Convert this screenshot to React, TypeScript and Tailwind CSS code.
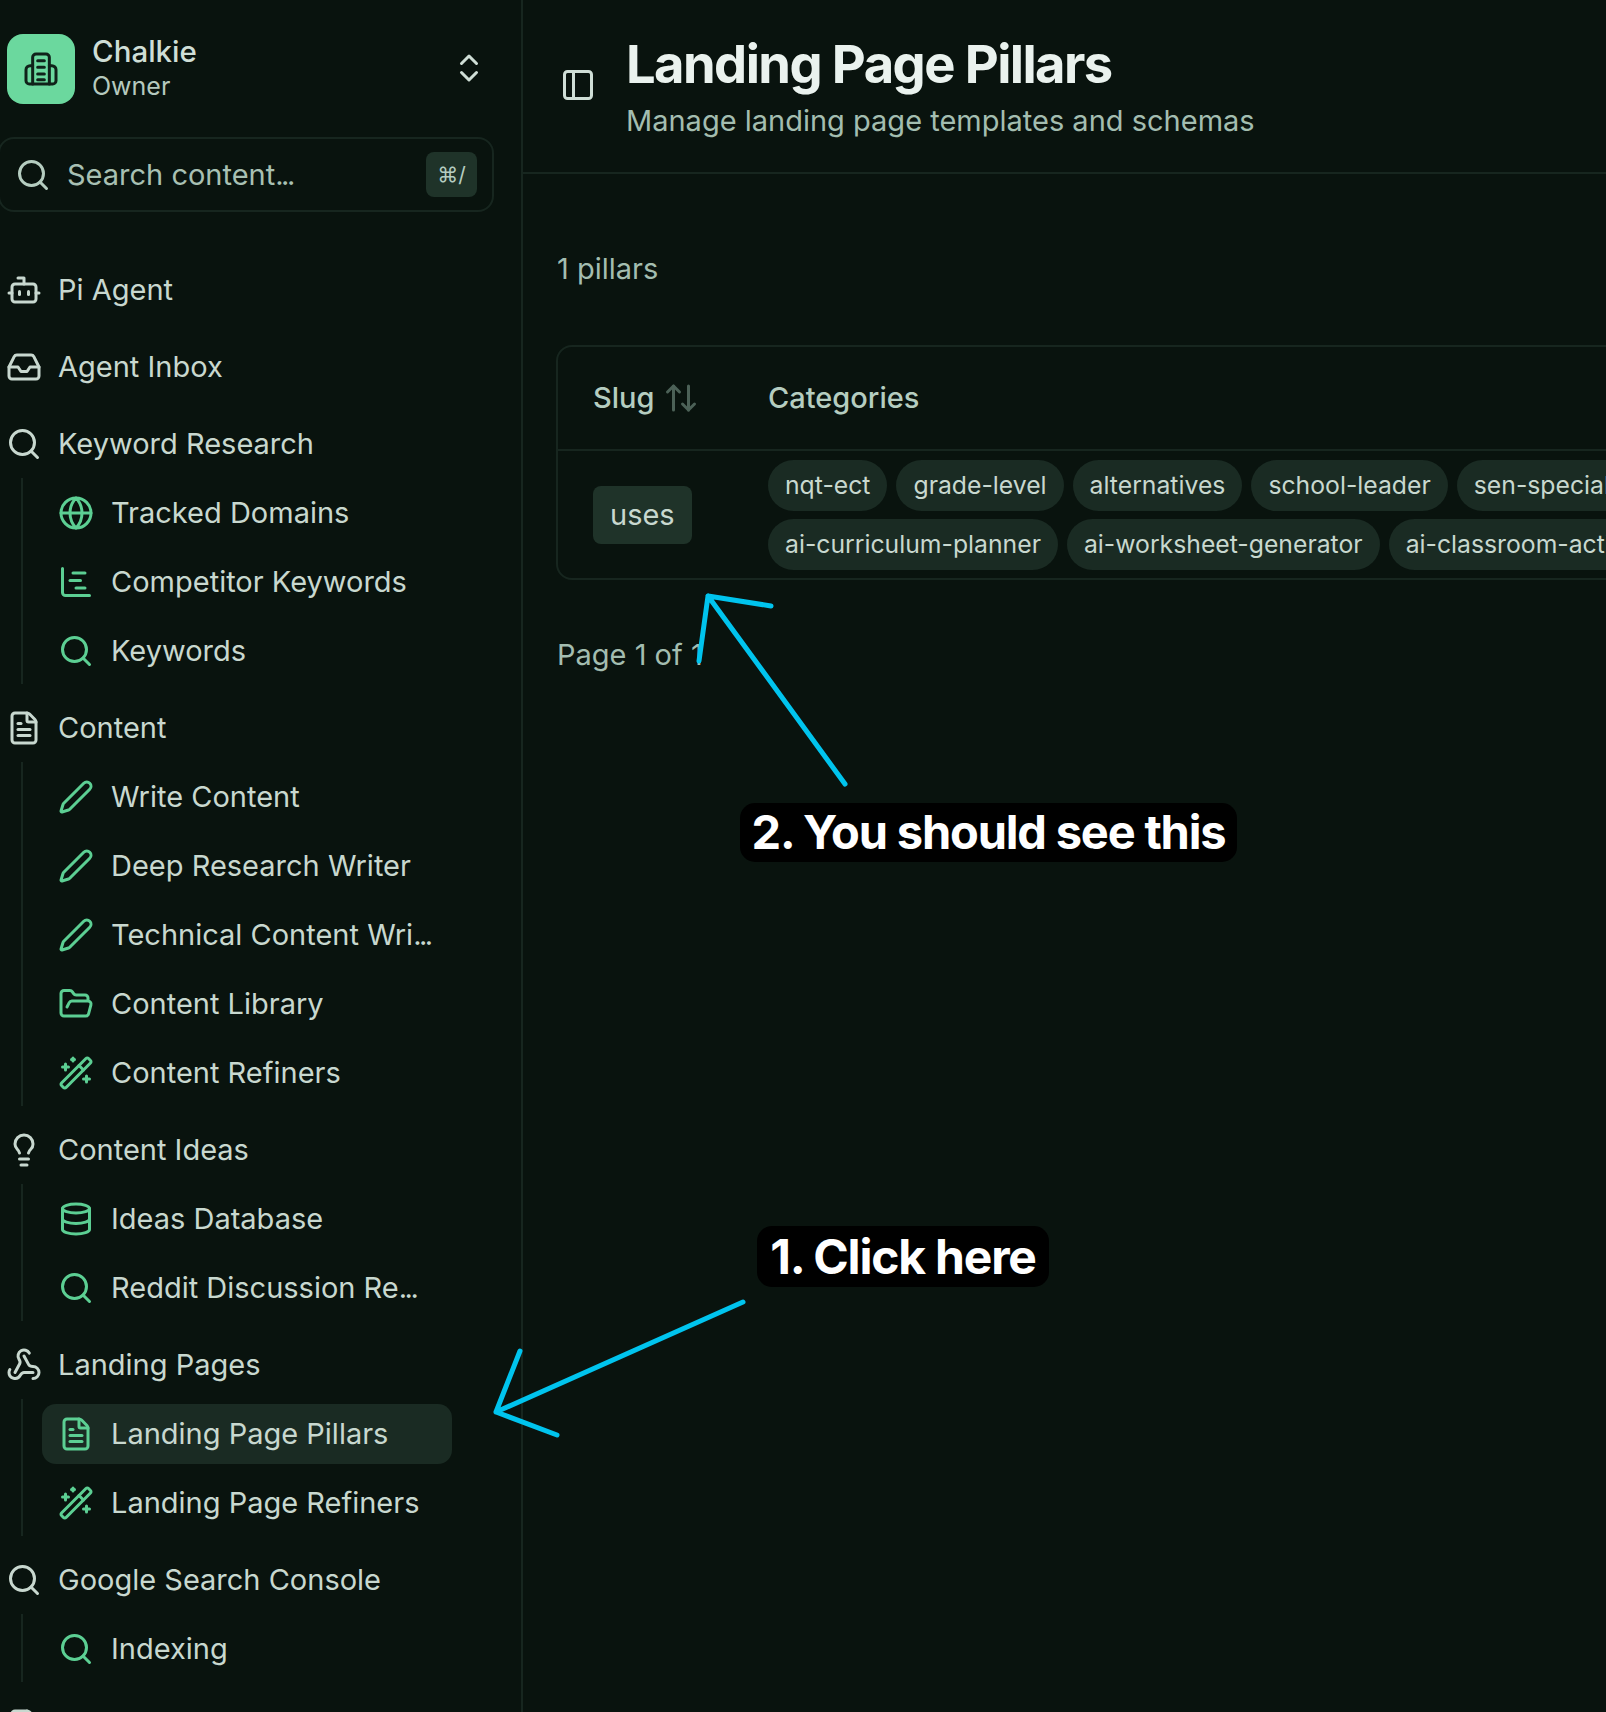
import {
  ArrowUpDown,
  Bot,
  ChartGantt,
  ChevronsUpDown,
  Database,
  FileText,
  FolderOpen,
  Globe,
  Inbox,
  Lightbulb,
  PanelLeft,
  Pen,
  Search,
  WandSparkles,
  Webhook,
} from 'lucide-react';
import type { LucideIcon } from 'lucide-react';

type SubItem = { icon: LucideIcon; label: string; active?: boolean; cut?: boolean };
type Group = { icon?: LucideIcon; label: string; items?: SubItem[] };

const groups: Group[] = [
  { icon: Bot, label: 'Pi Agent' },
  { icon: Inbox, label: 'Agent Inbox' },
  {
    icon: Search,
    label: 'Keyword Research',
    items: [
      { icon: Globe, label: 'Tracked Domains' },
      { icon: ChartGantt, label: 'Competitor Keywords' },
      { icon: Search, label: 'Keywords' },
    ],
  },
  {
    icon: FileText,
    label: 'Content',
    items: [
      { icon: Pen, label: 'Write Content' },
      { icon: Pen, label: 'Deep Research Writer' },
      { icon: Pen, label: 'Technical Content Wri', cut: true },
      { icon: FolderOpen, label: 'Content Library' },
      { icon: WandSparkles, label: 'Content Refiners' },
    ],
  },
  {
    icon: Lightbulb,
    label: 'Content Ideas',
    items: [
      { icon: Database, label: 'Ideas Database' },
      { icon: Search, label: 'Reddit Discussion Re', cut: true },
    ],
  },
  {
    icon: Webhook,
    label: 'Landing Pages',
    items: [
      { icon: FileText, label: 'Landing Page Pillars', active: true },
      { icon: WandSparkles, label: 'Landing Page Refiners' },
    ],
  },
  {
    icon: Search,
    label: 'Google Search Console',
    items: [{ icon: Search, label: 'Indexing' }],
  },
  // only the top of this icon is visible at the bottom edge
  { icon: FileText, label: '' },
];

const categoryRows = [
  ['nqt-ect', 'grade-level', 'alternatives', 'school-leader', 'sen-specialist'],
  ['ai-curriculum-planner', 'ai-worksheet-generator', 'ai-classroom-activities'],
];

const Dots = () => <span className="tracking-[-2.500px]">...</span>;

const LogoMark = () => (
  <svg width="40" height="40" viewBox="0 0 24 24" fill="none" stroke="#10221a" strokeWidth="1.8" strokeLinecap="round" strokeLinejoin="round">
    <path d="M7 21V5a2 2 0 0 1 2-2h6a2 2 0 0 1 2 2v16" />
    <path d="M7 10H5.500A2.500 2.500 0 0 0 3 12.500V19a2 2 0 0 0 2 2h14a2 2 0 0 0 2-2v-6.500a2.500 2.500 0 0 0-2.500-2.500H17" />
    <path d="M10 7h4M10 11h4M10 15h4M10 18.500h4" />
  </svg>
);

const Sidebar = () => (
  <aside className="w-[523px] shrink-0 border-r-2 border-[#17261f] pt-[34px] overflow-hidden">
    {/* Workspace */}
    <div className="flex items-center pl-[7px] pr-[34px]">
      <div className="w-[68px] h-[70px] rounded-[16px] bg-[#6bd89e] flex items-center justify-center shrink-0">
        <LogoMark />
      </div>
      <div className="ml-[17px] flex-1 -mt-[2px]">
        <p className="text-[29.500px] leading-[34px] font-medium text-[#cfded6]">Chalkie</p>
        <p className="text-[25px] leading-[32px] mt-[2px] text-[#b5c9be]">Owner</p>
      </div>
      <ChevronsUpDown size={36} strokeWidth={2} className="text-[#cfded6] -mt-[2px]" />
    </div>

    {/* Search */}
    <div className="mt-[33px] -ml-[2px] w-[496px] h-[75px] rounded-[16px] border-2 border-[#17261f] flex items-center pl-[15px] pr-[15px]">
      <Search size={36} strokeWidth={2} className="text-[#b5cdc0] shrink-0" />
      <span className="ml-[16px] flex-1 text-[29px] text-[#a8c0b3]">Search content<Dots /></span>
      <span className="w-[51px] h-[45px] rounded-[8px] bg-[#1f3329] flex items-center justify-center text-[21px] text-[#b5cdc0]">⌘/</span>
    </div>

    {/* Nav */}
    <nav className="mt-[48px] flex flex-col gap-[14px]">
      {groups.map((group) => {
        const GroupIcon = group.icon;
        return (
          <div key={group.label} className={group.items ? '' : 'mb-[3px]'}>
            <div className="h-[60px] flex items-center pl-[6px] text-[#c8d8cf]">
              {GroupIcon && <GroupIcon size={36} strokeWidth={2} className="shrink-0" />}
              <span className="ml-[16px] text-[29px]">{group.label}</span>
            </div>
            {group.items && (
              <div className="mt-[4px] ml-[21px] border-l-2 border-[#17261f] pl-[19px] pt-[5px] pb-[3px] flex flex-col gap-[9px] w-[431px]">
                {group.items.map((item) => {
                  const ItemIcon = item.icon;
                  return (
                    <div
                      key={item.label}
                      className={`h-[60px] rounded-[14px] flex items-center pl-[16px] pr-[21px] whitespace-nowrap ${item.active ? 'bg-[#1a2b23]' : ''}`}
                    >
                      <ItemIcon size={36} strokeWidth={2} className="text-[#5ccf93] shrink-0" />
                      <span className="ml-[17px] text-[29px] text-[#c8d8cf]">
                        {item.label}
                        {item.cut && <Dots />}
                      </span>
                    </div>
                  );
                })}
              </div>
            )}
          </div>
        );
      })}
    </nav>
  </aside>
);

const PillarsPage = () => (
  <main className="flex-1 min-w-0 overflow-hidden">
    <header className="h-[174px] border-b-2 border-[#17261f] flex items-start pt-[36px] pl-[37px]">
      <PanelLeft size={36} strokeWidth={2} className="mt-[31px] text-[#cfded6] shrink-0" />
      <div className="ml-[30px]">
        <h1 className="text-[52.500px] leading-[56px] font-bold tracking-[-0.03em] text-[#eaf2ee]">Landing Page Pillars</h1>
        <p className="mt-[9px] text-[29px] leading-[40px] text-[#a3bdb0]">Manage landing page templates and schemas</p>
      </div>
    </header>

    <div className="pl-[33px]">
      <p className="mt-[75px] pl-px text-[29px] leading-[40px] text-[#a3bdb0]">1 pillars</p>

      <div className="mt-[56px] w-[1500px] rounded-[16px] border-2 border-[#17261f]">
        <div className="h-[104px] border-b-2 border-[#17261f] flex items-center text-[29px] font-medium text-[#b5cdc0]">
          <div className="w-[210px] pl-[35px] flex items-center gap-[9px]">
            Slug
            <ArrowUpDown size={36} strokeWidth={2} className="text-[#4c6157]" />
          </div>
          <div>Categories</div>
        </div>
        <div className="flex items-center pt-[9px] pb-[8px]">
          <div className="w-[210px] pl-[35px]">
            <span className="inline-flex items-center h-[58px] px-[17px] rounded-[8px] bg-[#1f3329] text-[29px] text-[#c8d8cf]">uses</span>
          </div>
          <div className="flex flex-col gap-[8px]">
            {categoryRows.map((row) => (
              <div key={row[0]} className="flex gap-[9px]">
                {row.map((cat) => (
                  <span key={cat} className="h-[51px] px-[17px] rounded-full bg-[#1a2b23] flex items-center text-[24.750px] text-[#c8d8cf] whitespace-nowrap">
                    {cat}
                  </span>
                ))}
              </div>
            ))}
          </div>
        </div>
      </div>

      <p className="mt-[55px] pl-px text-[29px] leading-[40px] text-[#a3bdb0]">Page 1 of 1</p>
    </div>
  </main>
);

const App = () => (
  <div className="relative flex h-[1712px] overflow-hidden bg-[#09130e] [font-family:Inter,sans-serif]">
    <Sidebar />
    <PillarsPage />

    {/* Annotations */}
    <svg className="absolute inset-0 pointer-events-none" width="1606" height="1712" fill="none" stroke="#00c4ee" strokeWidth="5" strokeLinecap="round" strokeLinejoin="round">
      <path d="M845 784L708 596M771 606L708 596L699 661" />
      <path d="M743 1302L496 1412M520 1351L496 1412L557 1435" />
    </svg>
    <div className="absolute left-[740px] top-[803px] w-[497px] h-[59px] rounded-[15px] bg-black flex items-center justify-center text-[47px] font-bold tracking-tight text-white whitespace-nowrap">
      2. You should see this
    </div>
    <div className="absolute left-[757px] top-[1226px] w-[292px] h-[61px] rounded-[15px] bg-black flex items-center justify-center text-[48px] font-bold tracking-tight text-white whitespace-nowrap">
      1. Click here
    </div>
  </div>
);

export default App;
